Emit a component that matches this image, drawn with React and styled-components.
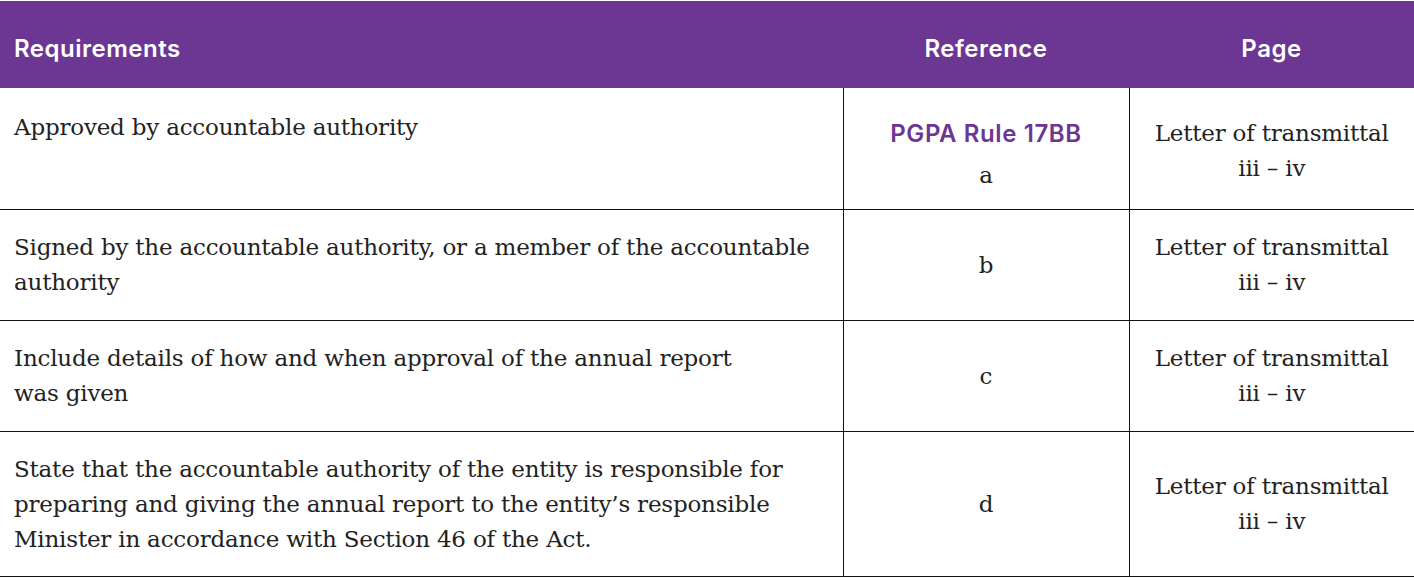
import styled, { createGlobalStyle } from 'styled-components'

const GlobalStyle = createGlobalStyle`
    html, body {
        margin: 0;
        padding: 0;
        background: #ffffff;
    }
    body {
        font-family: "DejaVu Serif", serif;
        color: #222222;
    }
`

const rows = [
    { text: ['Approved by accountable authority'], rule: 'PGPA Rule 17BB', letter: 'a' },
    { text: ['Signed by the accountable authority, or a member of the accountable', 'authority'], letter: 'b' },
    { text: ['Include details of how and when approval of the annual report', 'was given'], letter: 'c' },
    {
        text: [
            'State that the accountable authority of the entity is responsible for',
            'preparing and giving the annual report to the entity\u2019s responsible',
            'Minister in accordance with Section 46 of the Act.',
        ],
        letter: 'd',
    },
]

const App = () => {
    return (
        <>
            <GlobalStyle />
            <Page>
                <Table>
                    <colgroup>
                        <col style={{ width: '843px' }} />
                        <col style={{ width: '286px' }} />
                        <col />
                    </colgroup>
                    <thead>
                        <tr>
                            <HeadCell>Requirements</HeadCell>
                            <HeadCell center>Reference</HeadCell>
                            <HeadCell center>Page</HeadCell>
                        </tr>
                    </thead>
                    <tbody>
                        {rows.map((row, index) => (
                            <Row key={index}>
                                <TextCell first={index === 0}>
                                    {row.text.map((line, i) => <Line key={i}>{line}</Line>)}
                                </TextCell>
                                <RefCell first={index === 0}>
                                    {row.rule && <Rule>{row.rule}</Rule>}
                                    <Line>{row.letter}</Line>
                                </RefCell>
                                <PageCell first={index === 0}>
                                    <Line>Letter of transmittal</Line>
                                    <Line>iii &ndash; iv</Line>
                                </PageCell>
                            </Row>
                        ))}
                    </tbody>
                </Table>
            </Page>
        </>
    )
}

export default App

const Page = styled.div`
    width: 1414px;
    padding-top: 1px;
`
const Table = styled.table`
    width: 1414px;
    border-collapse: collapse;
    table-layout: fixed;
`
const HeadCell = styled.th`
    height: 79px;
    padding: 8px 14px 0;
    background: #6c3693;
    color: #ffffff;
    font-family: Inter, Roboto, sans-serif;
    font-weight: 600;
    font-size: 24px;
    letter-spacing: 0.5px;
    text-align: ${props => props.center ? 'center' : 'left'};
    vertical-align: middle;
`
const Row = styled.tr`
    border-bottom: 1px solid #111111;
`
const TextCell = styled.td`
    padding: ${props => props.first ? '22px' : '20px'} 14px 19px;
    vertical-align: top;
    font-size: 23px;
    letter-spacing: -0.2px;
    line-height: 35px;
`
const RefCell = styled.td`
    padding: ${props => props.first ? '28px 10px 16px' : '20px 10px'};
    border-left: 1px solid #111111;
    border-right: 1px solid #111111;
    text-align: center;
    vertical-align: middle;
    font-size: 23px;
    line-height: 35px;
`
const PageCell = styled.td`
    padding: ${props => props.first ? '24px 10px 20px' : '20px 10px'};
    text-align: center;
    vertical-align: middle;
    font-size: 23px;
    letter-spacing: -0.2px;
    line-height: 35px;
`
const Line = styled.div`
    white-space: nowrap;
`
const Rule = styled.div`
    margin-bottom: 7px;
    font-family: Inter, Roboto, sans-serif;
    font-weight: 600;
    font-size: 24px;
    letter-spacing: 0.6px;
    line-height: 35px;
    color: #6c3693;
`
